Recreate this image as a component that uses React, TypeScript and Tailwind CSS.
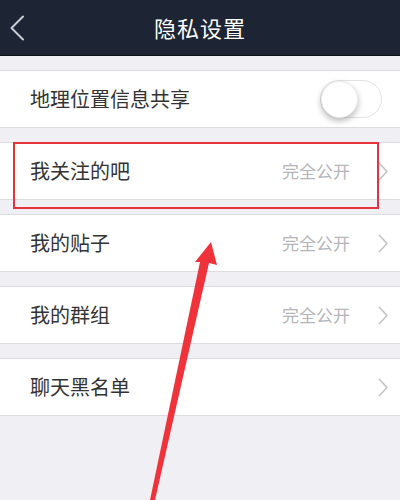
import React from 'react';

const font = { fontFamily: '"Noto Sans CJK SC", "Noto Sans", sans-serif' };

const Chevron: React.FC = () => (
  <svg width="11" height="19" viewBox="0 0 11 19" className="shrink-0">
    <path d="M1.5 1.5 L9 9.5 L1.5 17.5" fill="none" stroke="#c2c2c6" strokeWidth="1.6" strokeLinecap="round" strokeLinejoin="round" />
  </svg>
);

const Row: React.FC<{ label: string; value?: string }> = ({ label, value }) => (
  <div className="mt-[14px] h-[58px] bg-white border-y border-[#dcdce0] flex items-center pl-[30px] pr-[11px]">
    <span className="flex-1 text-[20px] text-[#333333]">{label}</span>
    {value && <span className="text-[17px] text-[#b5b5b8] mr-[28px]">{value}</span>}
    <Chevron />
  </div>
);

const App: React.FC = () => {
  const rows = [
    { label: '我关注的吧', value: '完全公开' },
    { label: '我的贴子', value: '完全公开' },
    { label: '我的群组', value: '完全公开' },
    { label: '聊天黑名单' },
  ];

  return (
    <div className="relative w-[400px] h-[500px] overflow-hidden bg-[#efeff4]" style={font}>
      {/* Nav bar */}
      <div className="h-[56px] bg-[#1d2434] border-b border-[#0c1018] grid grid-cols-[60px_1fr_60px] items-center">
        <div className="pl-[9px] flex items-center">
          <svg width="18" height="26" viewBox="0 0 18 26">
            <path d="M14 1.5 L2.5 13 L14 24.5" fill="none" stroke="#c9ccd3" strokeWidth="2" strokeLinecap="round" strokeLinejoin="round" />
          </svg>
        </div>
        <div className="text-center text-white text-[22px] tracking-[1px] leading-none -mt-[2px]">隐私设置</div>
        <div />
      </div>

      {/* Location sharing */}
      <div className="mt-[14px] h-[58px] bg-white border-y border-[#dcdce0] flex items-center pl-[30px] pr-[18px]">
        <span className="flex-1 text-[20px] text-[#333333]">地理位置信息共享</span>
        <div className="w-[62px] h-[38px] rounded-full bg-white border border-[#e3e3e6] flex items-center">
          <div className="w-[37px] h-[37px] rounded-full bg-white shadow-[0_3px_6px_rgba(0,0,0,0.28)] border border-[#ececec]" />
        </div>
      </div>

      {rows.map((r, i) => (
        <Row key={i} label={r.label} value={r.value} />
      ))}

      {/* Annotation: red highlight box */}
      <div className="absolute left-[13px] top-[142px] w-[366px] h-[67px] border-2 border-[#e5323b]" />

      {/* Annotation: red arrow */}
      <svg className="absolute left-0 top-0" width="400" height="500" viewBox="0 0 400 500">
        <polygon points="211,242 195,262 200,262 150,500 155,500 209,263 217,265" fill="#f0333b" />
      </svg>
    </div>
  );
};

export default App;
